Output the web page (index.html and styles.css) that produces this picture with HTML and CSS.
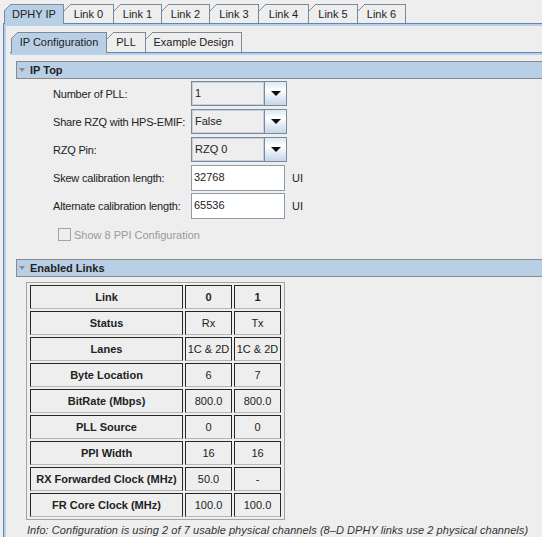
FILE: index.html
```html
<!DOCTYPE html>
<html>
<head>
<meta charset="utf-8">
<link rel="stylesheet" href="styles.css">
</head>
<body>
<div class="tabs outer-tabs">
  <div class="tab first sel w60">DPHY IP</div>
  <div class="tab w50">Link 0</div>
  <div class="tab w48">Link 1</div>
  <div class="tab w48">Link 2</div>
  <div class="tab w49">Link 3</div>
  <div class="tab w50">Link 4</div>
  <div class="tab w49">Link 5</div>
  <div class="tab w48">Link 6</div>
</div>
<div class="pane outer-pane">
  <div class="band outer-band">
    <div class="tabs inner-tabs">
      <div class="tab first sel w96">IP Configuration</div>
      <div class="tab w39">PLL</div>
      <div class="tab w96">Example Design</div>
    </div>
    <div class="pane inner-pane">
      <div class="band inner-band">
        <div class="section-head"><span class="tri"></span>IP Top</div>
        <div class="form">
          <div class="row">
            <span class="lbl">Number of PLL:</span>
            <div class="combo"><span class="val">1</span><span class="btn"><span class="arrow"></span></span></div>
          </div>
          <div class="row">
            <span class="lbl">Share RZQ with HPS-EMIF:</span>
            <div class="combo"><span class="val">False</span><span class="btn"><span class="arrow"></span></span></div>
          </div>
          <div class="row">
            <span class="lbl">RZQ Pin:</span>
            <div class="combo"><span class="val">RZQ 0</span><span class="btn"><span class="arrow"></span></span></div>
          </div>
          <div class="row">
            <span class="lbl">Skew calibration length:</span>
            <div class="field">32768</div><span class="unit">UI</span>
          </div>
          <div class="row">
            <span class="lbl">Alternate calibration length:</span>
            <div class="field">65536</div><span class="unit">UI</span>
          </div>
          <div class="check-row">
            <span class="box"></span><span class="check-lbl">Show 8 PPI Configuration</span>
          </div>
        </div>
        <div class="section-head links-head"><span class="tri"></span>Enabled Links</div>
        <div class="table-wrap">
          <table class="links">
            <tr><td class="h">Link</td><td class="h">0</td><td class="h">1</td></tr>
            <tr><td class="h">Status</td><td>Rx</td><td>Tx</td></tr>
            <tr><td class="h">Lanes</td><td>1C &amp; 2D</td><td>1C &amp; 2D</td></tr>
            <tr><td class="h">Byte Location</td><td>6</td><td>7</td></tr>
            <tr><td class="h">BitRate (Mbps)</td><td>800.0</td><td>800.0</td></tr>
            <tr><td class="h">PLL Source</td><td>0</td><td>0</td></tr>
            <tr><td class="h">PPI Width</td><td>16</td><td>16</td></tr>
            <tr><td class="h">RX Forwarded Clock (MHz)</td><td>50.0</td><td>-</td></tr>
            <tr><td class="h">FR Core Clock (MHz)</td><td>100.0</td><td>100.0</td></tr>
          </table>
        </div>
        <div class="info">Info: Configuration is using 2 of 7 usable physical channels (8–D DPHY links use 2 physical channels)</div>
      </div>
    </div>
  </div>
</div>
</body>
</html>
```
FILE: styles.css
```css
html, body {
  margin: 0;
  padding: 0;
  background: #eeeeee;
}
body {
  width: 542px;
  height: 537px;
  overflow: hidden;
  font-family: "Liberation Sans", Arial, sans-serif;
  font-size: 11px;
  color: #222222;
}

/* ---------- tabs ---------- */
.tabs {
  display: flex;
  align-items: flex-start;
  position: relative;
  z-index: 2;
}
.outer-tabs {
  height: 19px;
  padding: 4px 0 0 4px;
}
.inner-tabs {
  height: 20px;
  margin: 6px 0 0 5px;
}
.tab {
  box-sizing: border-box;
  position: relative;
  height: 19px;
  line-height: 18px;
  text-align: center;
  background: #eeeeee;
  border-top: 1px solid #7a8a99;
  border-right: 1px solid #7a8a99;
  white-space: nowrap;
}
.inner-tabs .tab {
  height: 20px;
  line-height: 19px;
}
.tab.first {
  border-left: 1px solid #7a8a99;
}
.tab::before {
  content: "";
  position: absolute;
  top: -1px;
  left: 0;
  width: 7px;
  height: 7px;
  background: linear-gradient(to bottom right,
    #eeeeee calc(50% - 0.6px),
    #7a8a99 calc(50% - 0.6px),
    #7a8a99 calc(50% + 0.6px),
    transparent calc(50% + 0.6px));
}
.tab.first::before {
  left: -1px;
}
.tab.sel {
  background: #b8cfe5;
  height: 20px;
}
.inner-tabs .tab.sel {
  height: 21px;
}
.w39 { width: 39px; }
.w48 { width: 48px; }
.w49 { width: 49px; }
.w50 { width: 50px; }
.w60 { width: 60px; }
.w96 { width: 96px; }

/* ---------- panes ---------- */
.outer-pane {
  margin-left: 3px;
  border-top: 1px solid #6382bf;
  border-left: 1px solid #6382bf;
}
.outer-band {
  border-top: 2px solid #b8cfe5;
  border-left: 2px solid #b8cfe5;
  height: 520px;
}
.inner-pane {
  margin-left: 4px;
  border-top: 1px solid #6382bf;
}
.inner-band {
  border-top: 2px solid #b8cfe5;
  padding-top: 6px;
}

/* ---------- section headers ---------- */
.section-head {
  box-sizing: border-box;
  display: flex;
  align-items: center;
  height: 18px;
  margin-left: 6px;
  background: #b8cfe5;
  border-top: 1px solid #8a8a8a;
  border-left: 1px solid #8a8a8a;
  border-bottom: 1px solid #8a8a8a;
  font-weight: bold;
  color: #222222;
}
.tri {
  width: 0;
  height: 0;
  margin: 0 5px 0 2px;
  border-left: 3px solid transparent;
  border-right: 3px solid transparent;
  border-top: 4px solid #8c8c8c;
}
.links-head {
  margin-top: 18px;
}

/* ---------- form ---------- */
.form {
  margin-top: 2px;
  padding-left: 43px;
}
.row {
  display: flex;
  align-items: center;
  height: 25px;
  margin-bottom: 3px;
}
.lbl {
  width: 138px;
  flex: none;
  letter-spacing: -0.2px;
}
.combo {
  box-sizing: border-box;
  display: flex;
  width: 96px;
  height: 25px;
  border: 1px solid #7a8a99;
}
.combo .val {
  flex: 1;
  background: #eeeeee;
  box-shadow: inset 0 0 0 1px #c3d3e3;
  padding-left: 3px;
  line-height: 22px;
}
.combo .btn {
  width: 21px;
  border-left: 1px solid #7a8a99;
  background: linear-gradient(#dde8f3, #ffffff 35%, #c4d6e8);
  display: flex;
  align-items: center;
  justify-content: center;
}
.arrow {
  width: 0;
  height: 0;
  border-left: 5px solid transparent;
  border-right: 5px solid transparent;
  border-top: 5px solid #111111;
}
.field {
  box-sizing: border-box;
  width: 94px;
  height: 26px;
  background: #ffffff;
  border: 1px solid #8e9dab;
  padding-left: 2px;
  line-height: 23px;
}
.unit {
  margin-left: 7px;
}
.check-row {
  display: flex;
  align-items: center;
  height: 13px;
  margin-top: 10px;
  padding-left: 5px;
}
.box {
  box-sizing: border-box;
  width: 13px;
  height: 13px;
  border: 1px solid #9aa7b4;
  background: #eeeeee;
}
.check-lbl {
  margin-left: 3px;
  color: #9a9a9a;
}

/* ---------- table ---------- */
.table-wrap {
  display: inline-block;
  margin: 5px 0 0 16px;
  border: 1px solid #a3a3a3;
  padding: 0 1px;
}
.links {
  border-collapse: separate;
  border-spacing: 2px;
  table-layout: fixed;
}
.links tr {
  height: 24px;
}
.links td {
  padding: 0;
  height: 22px;
  text-align: center;
  border: 1px solid #262626;
  border-bottom-color: #b5b5b5;
  width: 45px;
  white-space: nowrap;
}
.links td:first-child {
  width: 151px;
}
.links td.h {
  font-weight: bold;
}
.info {
  margin: 2px 0 0 17px;
  line-height: 13px;
  font-style: italic;
  color: #333333;
  white-space: nowrap;
  letter-spacing: 0.06px;
}
```
